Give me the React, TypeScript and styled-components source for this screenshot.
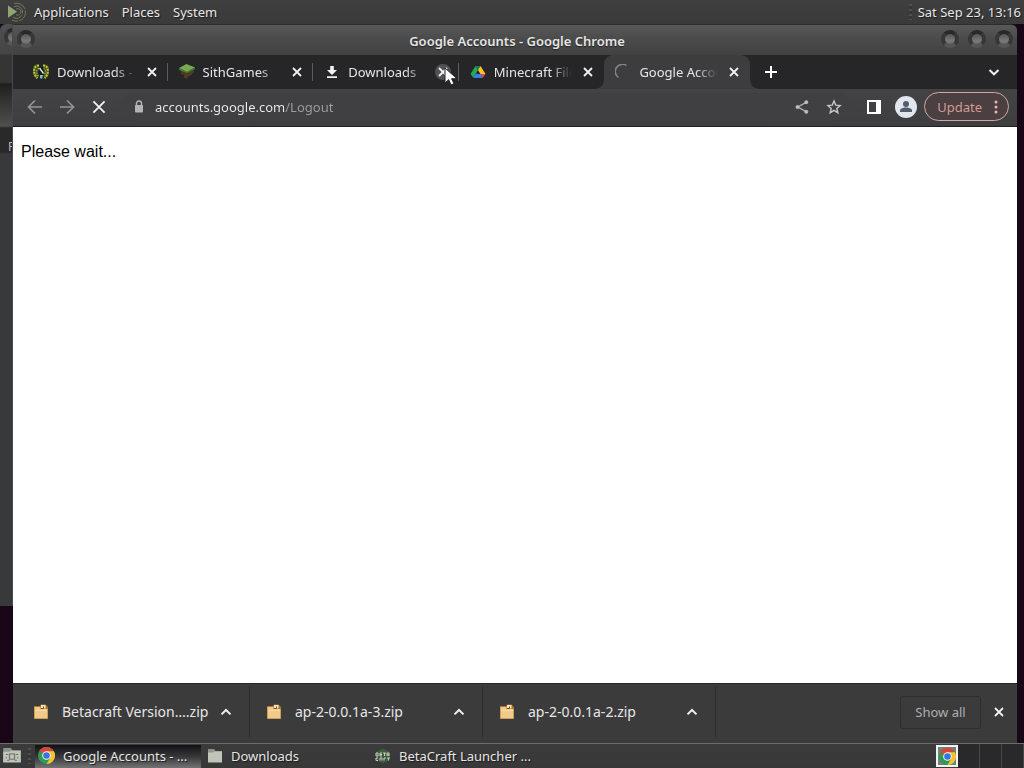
import React from 'react';
import styled, { createGlobalStyle, css } from 'styled-components';

const GlobalStyle = createGlobalStyle`
  * { box-sizing: border-box; }
  body {
    margin: 0;
    background: #190718;
    color: #e6e6e6;
    font: 13px/18px "Noto Sans", sans-serif;
  }
  button, input { font: inherit; color: inherit; }
  svg { display: block; flex: none; }
`;

const Screen = styled.div`
  display: flex;
  flex-direction: column;
  min-height: 100vh;
`;

const TopPanel = styled.header`
  display: flex;
  align-items: center;
  height: 24px;
  padding: 0 3px 0 8px;
  background: linear-gradient(#3f3f3f, #3a3a3b);
  text-shadow: 1px 1px 1px #1b1b1b;
`;

const PanelMenu = styled.nav`
  display: flex;
  flex: 1;
  gap: 13px;
  margin-left: 7px;
`;

const PlainButton = styled.button`
  display: flex;
  align-items: center;
  justify-content: center;
  padding: 0;
  border: 0;
  background: none;
  text-shadow: inherit;
`;

const Grip = styled.span`
  width: 3px;
  height: 16px;
  margin-right: 6px;
  background: repeating-linear-gradient(#505050 0 2px, #363636 2px 5px);
`;

const Desktop = styled.main`
  display: flex;
  flex: 1;
  background: #190718;
`;

const BackWindow = styled.div`
  display: flex;
  flex-direction: column;
  justify-content: space-between;
  width: 13px;
  height: 582px;
  padding: 6px 0 450px 4px;
  overflow: hidden;
  border-radius: 6px 0 0 0;
  border-right: 1px solid #4a474b;
  background: linear-gradient(#505050 0, #454546 30px, #353536 31px 58px, #1f1f20 60px, #4f504c 102px, #29292a 104px 128px, #38393a 130px);
`;

const BackLabel = styled.span`
  padding-left: 4px;
  color: #b5b5b5;
  font-size: 12px;
  line-height: 18px;
`;

const Window = styled.section`
  display: flex;
  flex: 1;
  flex-direction: column;
  min-width: 0;
  margin-right: 7px;
`;

const TitleBar = styled.div`
  display: flex;
  align-items: center;
  height: 31px;
  padding: 0 4px;
  border-top: 1px solid #2d2d2d;
  border-radius: 0 6px 0 0;
  background: linear-gradient(#585858, #4b4b4b 45%, #414142);
`;

const WindowTitle = styled.h1`
  flex: 1;
  margin: 2px 0 0 58px;
  font-size: 13px;
  font-weight: 600;
  line-height: 18px;
  text-align: center;
  text-shadow: 0 1px 1px #222;
`;

const Orbs = styled.div`
  display: flex;
  gap: 9px;
`;

const Orb = styled.button`
  flex: none;
  width: 18px;
  height: 18px;
  margin-top: -2px;
  padding: 0;
  border: 4px solid;
  border-color: #29292a #373737 #565653;
  border-radius: 50%;
  background: linear-gradient(#555, #7a7a7a 70%, #696969);
`;

const TabStrip = styled.div`
  display: flex;
  align-items: center;
  height: 34px;
  padding: 0 13px 0 9px;
  background: #262628;
`;

const Tabs = styled.div`
  display: flex;
  flex: 0 1 728px;
  align-self: stretch;
  min-width: 0;
`;

const Tab = styled.div<{ $active?: boolean; $divider?: boolean }>`
  position: relative;
  display: flex;
  flex: 1 1 0;
  align-items: center;
  gap: 8px;
  min-width: 0;
  padding: 0 8px 0 11px;
  border-radius: 9px 9px 0 0;

  ${p => p.$divider && css`
    &::after {
      content: "";
      position: absolute;
      top: 8px;
      right: 0;
      width: 1px;
      height: 18px;
      background: #5b5b5e;
    }
  `}

  ${p => p.$active && css`
    background: #3d3d3f;
    &::before, &::after {
      content: "";
      position: absolute;
      bottom: 0;
      width: 8px;
      height: 8px;
    }
    &::before {
      right: 100%;
      background: radial-gradient(circle at 0 0, transparent 7px, #3d3d3f 8px);
    }
    &::after {
      left: 100%;
      background: radial-gradient(circle at 100% 0, transparent 7px, #3d3d3f 8px);
    }
  `}
`;

const TabLabel = styled.span`
  flex: 1;
  min-width: 0;
  overflow: hidden;
  white-space: nowrap;
  mask-image: linear-gradient(to right, #000 calc(100% - 22px), transparent);
`;

const TabClose = styled(PlainButton)<{ $hover?: boolean }>`
  width: 16px;
  height: 16px;
  flex: none;
  border-radius: 50%;
  background: ${p => (p.$hover ? '#525255' : 'none')};
`;

const NewTab = styled(PlainButton)`
  width: 28px;
  height: 28px;
  margin-left: 7px;
`;

const TabSearch = styled(PlainButton)`
  width: 20px;
  height: 20px;
  margin-left: auto;
`;

const Pointer = styled.svg`
  position: absolute;
  z-index: 2;
  top: 12px;
  right: 0;
`;

const Toolbar = styled.div`
  display: flex;
  align-items: center;
  height: 38px;
  padding: 0 8px 2px 14px;
  border-bottom: 1px solid #1f1f20;
  background: linear-gradient(#434345, #3e3e40);
`;

const NavButtons = styled.div`
  display: flex;
  gap: 16px;
`;

const NavButton = styled(PlainButton)`
  width: 16px;
  height: 16px;
`;

const AddressBar = styled.form`
  display: flex;
  flex: 1;
  align-items: center;
  height: 28px;
  margin-left: 14px;
  padding: 0 8px 0 13px;
  border-radius: 14px;
  background: #403f42;
`;

const Address = styled.input`
  flex: 1;
  min-width: 0;
  height: 20px;
  margin-left: 11px;
  padding: 0;
  border: 0;
  outline: 0;
  color: transparent;
  font-size: 13px;
  background: linear-gradient(to right, #ececec 129px, #9d9da0 129px);
  background-clip: text;
`;

const AddressActions = styled.div`
  display: flex;
  gap: 16px;
`;

const ToolbarActions = styled.div`
  display: flex;
  align-items: center;
  gap: 14px;
  margin-left: 17px;
`;

const UpdateButton = styled.button`
  display: flex;
  align-items: center;
  gap: 12px;
  height: 29px;
  margin-left: 7px;
  padding: 0 10px 0 12px;
  border: 1px solid #d0a8a5;
  border-radius: 15px;
  background: #4b3f41;
  color: #d39a96;
`;

const Page = styled.article`
  flex: 1;
  padding: 16px 8px;
  background: #fff;
  color: #000;
  font: 16px/18px "Liberation Sans", sans-serif;

  p { margin: 0; }
`;

const DownloadShelf = styled.footer`
  display: flex;
  align-items: center;
  height: 60px;
  padding: 0 8px 3px 0;
  border-top: 1px solid #29292a;
  background: #3b3b3c;
`;

const Download = styled.div<{ $first?: boolean }>`
  display: flex;
  align-items: center;
  flex: 0 1 ${p => (p.$first ? '237px' : '233px')};
  min-width: 0;
  height: 50px;
  padding: 0 17px 0 ${p => (p.$first ? '20px' : '16px')};
  border-right: 1px solid #2c2c2d;
`;

const FileName = styled.span`
  flex: 1;
  margin-left: 13px;
  overflow: hidden;
  font-size: 14px;
  line-height: 20px;
  white-space: nowrap;
`;

const ShowAll = styled.button`
  width: 81px;
  height: 33px;
  margin: 0 10px 0 auto;
  padding: 0;
  border: 1px solid #2d2d2e;
  border-radius: 3px;
  background: none;
  color: #aeaeb0;
`;

const CloseShelf = styled(PlainButton)`
  width: 16px;
  height: 16px;
  margin-right: 2px;
`;

const Taskbar = styled.footer`
  display: flex;
  height: 25px;
  padding-left: 2px;
  border-top: 1px solid #6c6c6c;
  background: linear-gradient(#3b3b3c, #383839);
  text-shadow: 1px 1px 1px #1b1b1b;
`;

const FileManager = styled(PlainButton)`
  width: 20px;
  padding-bottom: 1px;
`;

const TaskGrip = styled(Grip)`
  align-self: center;
  margin: 0 4px 0 6px;
`;

const Task = styled(PlainButton)<{ $active?: boolean }>`
  justify-content: flex-start;
  flex: 0 1 ${p => (p.$active ? '166px' : '168px')};
  gap: 8px;
  min-width: 0;
  margin-top: 1px;
  padding: 0 0 2px 3px;
  white-space: nowrap;
  background: ${p => (p.$active ? 'linear-gradient(#121216, #37373a 50%, #737375)' : 'none')};

  & + & { padding-left: 6px; }
`;

const Workspaces = styled.div`
  display: flex;
  margin-left: auto;
`;

const Workspace = styled.button<{ $current?: boolean }>`
  display: flex;
  align-items: center;
  justify-content: center;
  width: 22px;
  padding: 0;
  border: 0 solid #474748;
  border-right-width: 1px;
  background: #29292b;

  ${p => p.$current && css`
    height: 22px;
    margin-top: 1px;
    border: 2px solid #f3f3f3;
    background: #738276;
  `}
`;

function Cross({ size = 10 }: { size?: number }) {
  return (
    <svg width={size} height={size} viewBox="0 0 10 10" stroke="#f2f2f2" strokeWidth={size > 10 ? 1.3 : 1.8}>
      <path d="M1 1l8 8M9 1L1 9" />
    </svg>
  );
}

function Chevron({ down }: { down?: boolean }) {
  return (
    <svg width="12" height="12" viewBox="0 0 12 12" fill="none" stroke="#eee" strokeWidth="2">
      <path d={down ? 'M1.5 4l4.5 4.3L10.5 4' : 'M1.5 8.4L6 4l4.5 4.4'} />
    </svg>
  );
}

function MateLogo() {
  return (
    <svg width="19" height="20" viewBox="0 0 19 20" fill="none" stroke="#6f7b5a">
      <path d="M0 3.5l9 6.3-9 6z" fill="#91a570" stroke="none" />
      <path d="M6 4.800A6 6 0 1 1 5 15M8 7A3.300 3.300 0 1 1 8 12.800M6 1.500A9 9 0 1 1 4 18" strokeWidth="1" strokeDasharray="13 1.500" />
    </svg>
  );
}

function LaurelIcon() {
  return (
    <svg width="16" height="16" viewBox="0 0 16 16" fill="none">
      <path d="M5.500 2C0 2 .5 11 5 13.500M10.500 2c5.500 0 5 9 .5 11.500" stroke="#3c5420" strokeWidth="4.500" />
      <path d="M6 1.500C-.5 1.500 0 11 4.500 14M10 1.500c6.500 0 6 9.500 1.500 12.500" stroke="#cfcb36" strokeWidth="2" strokeDasharray="2 1" />
      <path d="M6 4.500C3 5 3 10 5.500 12M10.500 4.500c2.500 1 2.500 5 0 7" stroke="#a3ac35" strokeWidth="1.400" strokeDasharray="1.500 1" />
      <path d="M6 3h4l1 8-2 2-3-2z" fill="#171b1b" />
      <path d="M6.500 4l4 5.500" stroke="#dce8e2" strokeWidth="1.400" />
      <path d="M7 11h3l-1 4-2-1z" fill="#6ebfd0" />
    </svg>
  );
}

function GrassIcon() {
  return (
    <svg width="16" height="16" viewBox="0 0 16 16">
      <path d="M1.500 5L8 7.500V15l-3-1.500V11l-3-1z" fill="#51391f" />
      <path d="M8 7.500L15 5v3.500l-2 1v1L10 12l-2 2z" fill="#4a3d23" />
      <path d="M0 4L7.500 0 16 3.500 8 8z" fill="#76aa51" />
      <path d="M0 4l8 4 8-4.500V5L8 9 0 6z" fill="#477b31" />
    </svg>
  );
}

function DownloadIcon() {
  return (
    <svg width="16" height="16" viewBox="0 0 16 16" fill="#f2f2f2">
      <path d="M6.200 2h3.600v4H13l-5 5-5-5h3.200zM3 12.200h10V14H3z" />
    </svg>
  );
}

function DriveIcon() {
  return (
    <svg width="16" height="16" viewBox="0 0 16 16">
      <path d="M5.500 2L8 6 3.500 14 .5 9.900z" fill="#25a756" />
      <path d="M5.500 2h5L8 6z" fill="#168044" />
      <path d="M10.500 2L15.500 10h-5L8 6z" fill="#ffc12d" />
      <path d="M3.500 14l2.200-4h5l2 4z" fill="#3e7bec" />
      <path d="M10.700 10h4.800l-2.800 4z" fill="#e54b42" />
    </svg>
  );
}

function SpinnerIcon() {
  return (
    <svg width="16" height="16" viewBox="0 0 16 16" fill="none" stroke="#858587" strokeWidth="1.500">
      <path d="M3.500 13.500A7 7 0 0 1 11.500 1.500" />
    </svg>
  );
}

function Arrow({ forward }: { forward?: boolean }) {
  return (
    <svg width="16" height="16" viewBox="0 0 16 16" fill="none" stroke="#949497" strokeWidth="1.700">
      <path d={forward ? 'M1 8h13M8 1.500L14.500 8 8 14.500' : 'M15 8H2M8 1.500L1.500 8 8 14.500'} />
    </svg>
  );
}

function LockIcon() {
  return (
    <svg width="10" height="14" viewBox="0 0 10 14">
      <path d="M2.500 6V3.500a2.500 2.500 0 0 1 5 0V6" fill="none" stroke="#b4b4b6" strokeWidth="1.400" />
      <rect x="1" y="5" width="8" height="7.500" rx="1" fill="#b4b4b6" />
    </svg>
  );
}

function ShareIcon() {
  return (
    <svg width="16" height="16" viewBox="0 0 16 16" fill="#bebec0" stroke="#bebec0">
      <path d="M12 3.500L3.700 8l8.300 4.500" fill="none" strokeWidth="1.300" />
      <circle cx="12.300" cy="3.200" r="1.500" />
      <circle cx="3.500" cy="8" r="1.500" />
      <circle cx="12.300" cy="12.800" r="1.500" />
    </svg>
  );
}

function StarIcon() {
  return (
    <svg width="16" height="16" viewBox="0 0 16 16" fill="none" stroke="#c7c7c9" strokeWidth="1.400">
      <path d="M8 2l1.700 4.100 4.400.4-3.300 2.900 1 4.300L8 11.400l-3.800 2.300 1-4.300-3.300-2.900 4.400-.4z" />
    </svg>
  );
}

function SidePanelIcon() {
  return (
    <svg width="14" height="14" viewBox="0 0 14 14">
      <path d="M0 0h14v14H0zM2 2v10h7V2z" fill="#fff" fillRule="evenodd" />
    </svg>
  );
}

function ProfileIcon() {
  return (
    <svg width="22" height="22" viewBox="0 0 22 22">
      <circle cx="11" cy="11" r="11" fill="#e3e7ed" />
      <circle cx="11" cy="8" r="3" fill="#535d6d" />
      <path d="M5 16v-1.500c0-4 12-4 12 0V16z" fill="#535d6d" />
    </svg>
  );
}

function MoreIcon() {
  return (
    <svg width="4" height="14" viewBox="0 0 4 14" fill="#efb4ae">
      <circle cx="2" cy="2" r="1.500" />
      <circle cx="2" cy="7" r="1.500" />
      <circle cx="2" cy="12" r="1.500" />
    </svg>
  );
}

function ZipIcon() {
  return (
    <svg width="16" height="16" viewBox="0 0 16 16">
      <path d="M1 2h6l1-1.500h4.500L15 3v12H1z" fill="#a97631" />
      <path d="M1.500 3h6v2h7v9.500h-13z" fill="#efca88" />
      <path d="M8 1h4.500v3.500H8z" fill="#f5e5bd" />
      <path d="M2 6.500h12" stroke="#f8dca5" />
      <path d="M8 4.500h2.500V2.500" fill="none" stroke="#705029" />
    </svg>
  );
}

function FolderIcon({ camera }: { camera?: boolean }) {
  return (
    <svg width={camera ? 20 : 16} height={camera ? 17 : 16} viewBox="0 0 16 16" preserveAspectRatio="none">
      <path d="M1 1h6l1.500 2H15V14H1z" fill="#8f958d" />
      <path d="M1 4.500h5l1-1h8V14.500H1z" fill="#c0c5b9" />
      {camera && (
        <g fill="none" stroke="#6d756c">
          <rect x="6" y="6.500" width="4" height="5" />
          <path d="M3 7h2M3 10h1M11 7h2M12 10h1M4 12.500h2M10 12.500h2" />
        </g>
      )}
    </svg>
  );
}

function ChromeIcon() {
  return (
    <svg width="17" height="17" viewBox="0 0 18 18">
      <circle cx="9" cy="9" r="9" fill="#2e9b51" />
      <path d="M9 9L1.200 4.500A9 9 0 0 1 16.800 4.500H9z" fill="#d94436" />
      <path d="M9 4.500h7.800A9 9 0 0 1 9 18l4-6.700z" fill="#f5c332" />
      <circle cx="9" cy="9" r="4.600" fill="#f5f5f5" />
      <circle cx="9" cy="9" r="3.500" fill="#3875d7" />
    </svg>
  );
}

function LauncherIcon() {
  return (
    <svg width="16" height="16" viewBox="0 0 16 16">
      <path d="M1 4l7-3.500L15 4v8l-7 3.500L1 12z" fill="#3e5b3d" />
      <path d="M1 5h2v3H1zm4 0h2M5 5v3h2M5 6.500h2M8 5h3M9.500 5v3M12 8V5h2v3m-2-1h2M3 10H1v2.500h2M5 12.500V10h2v2.500M9 12.500V10h2M12 10h3m-1.500 0v2.500" fill="none" stroke="#c8ccc2" />
    </svg>
  );
}

const tabs = [
  { title: 'Downloads - BetaCraft', icon: <LaurelIcon />, divider: true },
  { title: 'SithGames', icon: <GrassIcon />, divider: true },
  { title: 'Downloads', icon: <DownloadIcon />, divider: true, hover: true },
  { title: 'Minecraft Files', icon: <DriveIcon /> },
  { title: 'Google Accounts', icon: <SpinnerIcon />, active: true },
];

const downloads = ['Betacraft Version….zip', 'ap-2-0.0.1a-3.zip', 'ap-2-0.0.1a-2.zip'];

export default function App() {
  return (
    <Screen>
      <GlobalStyle />
      <TopPanel>
        <MateLogo />
        <PanelMenu>
          <PlainButton>Applications</PlainButton>
          <PlainButton>Places</PlainButton>
          <PlainButton>System</PlainButton>
        </PanelMenu>
        <Grip />
        <time dateTime="2023-09-23T13:16">Sat Sep 23, 13:16</time>
      </TopPanel>

      <Desktop>
        <BackWindow>
          <Orb as="div" />
          <BackLabel>F</BackLabel>
        </BackWindow>
        <Window>
          <TitleBar>
            <Orb aria-label="Window menu" />
            <WindowTitle>Google Accounts - Google Chrome</WindowTitle>
            <Orbs>
              <Orb aria-label="Minimize" />
              <Orb aria-label="Maximize" />
              <Orb aria-label="Close window" />
            </Orbs>
          </TitleBar>

          <TabStrip>
            <Tabs role="tablist">
              {tabs.map(tab => (
                <Tab key={tab.title} role="tab" aria-selected={!!tab.active} $active={tab.active} $divider={tab.divider}>
                  {tab.icon}
                  <TabLabel>{tab.title}</TabLabel>
                  <TabClose aria-label={`Close ${tab.title}`} $hover={tab.hover}><Cross /></TabClose>
                  {tab.hover && (
                    <Pointer width="16" height="20" viewBox="0 0 16 20">
                      <path d="M2 1v15l3.700-3.300L8 18l3-1.300-2.400-5H14z" fill="#fff" stroke="#222" />
                    </Pointer>
                  )}
                </Tab>
              ))}
            </Tabs>
            <NewTab aria-label="New tab">
              <svg width="12" height="12" viewBox="0 0 12 12" stroke="#fff" strokeWidth="2"><path d="M6 0v12M0 6h12" /></svg>
            </NewTab>
            <TabSearch aria-label="Search tabs"><Chevron down /></TabSearch>
          </TabStrip>

          <Toolbar>
            <NavButtons>
              <NavButton aria-label="Back"><Arrow /></NavButton>
              <NavButton aria-label="Forward"><Arrow forward /></NavButton>
              <NavButton aria-label="Stop"><Cross size={14} /></NavButton>
            </NavButtons>
            <AddressBar>
              <LockIcon />
              <Address aria-label="Address" defaultValue="accounts.google.com/Logout" />
              <AddressActions>
                <NavButton type="button" aria-label="Share"><ShareIcon /></NavButton>
                <NavButton type="button" aria-label="Bookmark"><StarIcon /></NavButton>
              </AddressActions>
            </AddressBar>
            <ToolbarActions>
              <PlainButton aria-label="Side panel"><SidePanelIcon /></PlainButton>
              <PlainButton aria-label="Profile"><ProfileIcon /></PlainButton>
            </ToolbarActions>
            <UpdateButton>Update<MoreIcon /></UpdateButton>
          </Toolbar>

          <Page><p>Please wait...</p></Page>

          <DownloadShelf>
            {downloads.map((name, i) => (
              <Download key={name} $first={i === 0}>
                <ZipIcon />
                <FileName>{name}</FileName>
                <PlainButton aria-label={`Options for ${name}`}><Chevron /></PlainButton>
              </Download>
            ))}
            <ShowAll>Show all</ShowAll>
            <CloseShelf aria-label="Close downloads bar"><Cross /></CloseShelf>
          </DownloadShelf>
        </Window>
      </Desktop>

      <Taskbar>
        <FileManager aria-label="Show desktop"><FolderIcon camera /></FileManager>
        <TaskGrip />
        <Task $active><ChromeIcon />Google Accounts - ...</Task>
        <Task><FolderIcon />Downloads</Task>
        <Task><LauncherIcon />BetaCraft Launcher ...</Task>
        <Workspaces>
          <Workspace $current aria-label="Workspace 1"><ChromeIcon /></Workspace>
          <Workspace aria-label="Workspace 2" />
          <Workspace aria-label="Workspace 3" />
          <Workspace aria-label="Workspace 4" />
        </Workspaces>
      </Taskbar>
    </Screen>
  );
}
